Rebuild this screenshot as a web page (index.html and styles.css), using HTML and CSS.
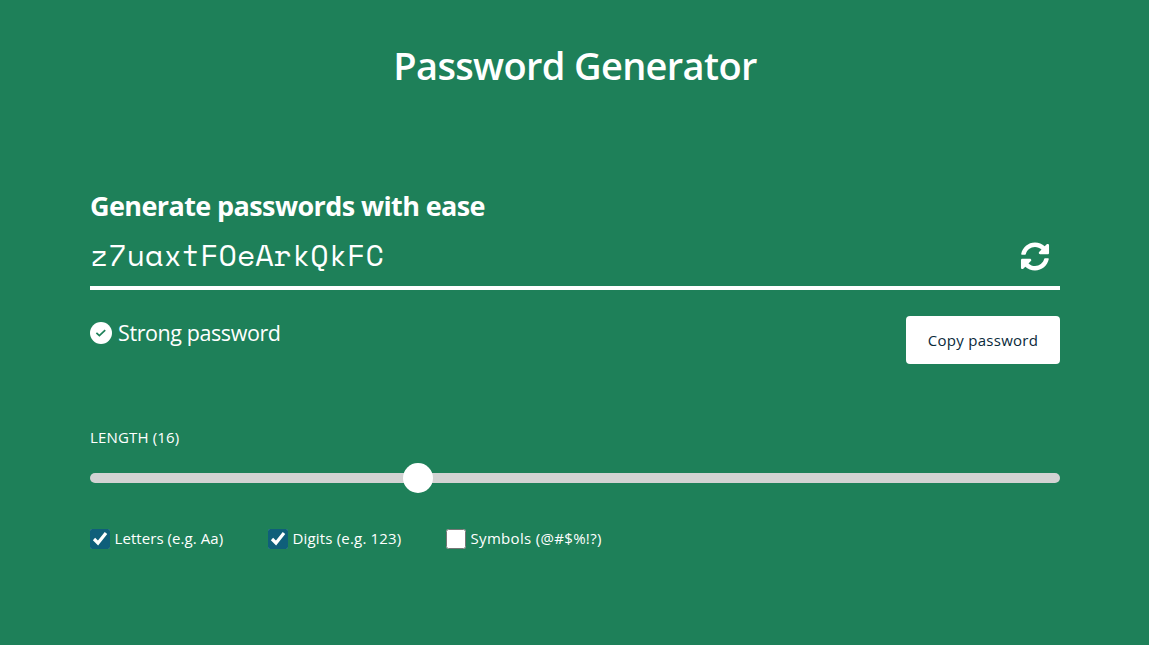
FILE: index.html
```html
<!DOCTYPE html>
<html lang="en">
<head>
<meta charset="utf-8">
<title>Password Generator</title>
<link rel="stylesheet" href="styles.css">
</head>
<body>
<main class="page">
  <h1 class="title"><span>Password Generator</span></h1>
  <h2 class="subtitle"><span>Generate passwords with ease</span></h2>
  <div class="password">
    <span class="password-text">z7uaxtFOeArkQkFC</span>
    <button class="refresh" aria-label="Generate a new password">
      <svg viewBox="0 0 512 512" width="30" height="29"><path fill="currentColor" d="M370.72 133.28C339.458 104.008 298.888 87.962 255.848 88c-77.458.068-144.328 53.178-162.791 126.85-1.344 5.363-6.122 9.15-11.651 9.15H24.103c-7.498 0-13.194-6.807-11.807-14.176C33.933 94.924 134.813 8 256 8c66.448 0 126.791 26.136 171.315 68.685L463.03 40.97C478.149 25.851 504 36.559 504 57.941V192c0 13.255-10.745 24-24 24H345.941c-21.382 0-32.09-25.851-16.971-40.971l41.75-41.749zM32 296h134.059c21.382 0 32.09 25.851 16.971 40.971l-41.75 41.75c31.262 29.273 71.835 45.319 114.876 45.28 77.418-.07 144.315-53.144 162.787-126.849 1.344-5.363 6.122-9.15 11.651-9.15h57.304c7.498 0 13.194 6.807 11.807 14.176C478.067 417.076 377.187 504 256 504c-66.448 0-126.791-26.136-171.315-68.685L48.97 471.03C33.851 486.149 8 475.441 8 454.059V320c0-13.255 10.745-24 24-24z"/></svg>
    </button>
  </div>
  <div class="status-row">
    <div class="status">
      <svg class="status-icon" viewBox="0 0 22 22" width="22" height="22"><circle cx="11" cy="11" r="11" fill="#fff"/><path d="M6.4 10.9l3 2.8 5.8-5.6" fill="none" stroke="#1e8059" stroke-width="1.7"/></svg>
      <span class="status-text">Strong password</span>
    </div>
    <button class="copy"><span>Copy password</span></button>
  </div>
  <label class="length" for="length"><span>LENGTH (16)</span></label>
  <input class="slider" id="length" type="range" min="6" max="36" value="16">
  <div class="options">
    <label class="option"><input class="check" type="checkbox" checked><span class="letters">Letters (e.g. Aa)</span></label>
    <label class="option"><input class="check" type="checkbox" checked><span class="digits">Digits (e.g. 123)</span></label>
    <label class="option"><input class="check" type="checkbox"><span class="symbols">Symbols (@#$%!?)</span></label>
  </div>
</main>
</body>
</html>
```
FILE: styles.css
```css
* { box-sizing: border-box; }
body {
  margin: 0;
  background: #1e8059;
  color: #fff;
  font-family: "Segoe UI", "Open Sans", "Noto Sans", sans-serif;
}
.page {
  width: 970px;
  margin-left: 90px;
  padding-top: 40px;
  display: flex;
  flex-direction: column;
}
.title {
  margin: 0;
  height: 52px;
  line-height: 50px;
  text-align: center;
  font-size: 38px;
  font-weight: 600;
  letter-spacing: -0.65px;
}
.subtitle {
  margin: 95px 0 0;
  height: 38px;
  line-height: 38px;
  font-size: 27px;
  font-weight: 700;
  letter-spacing: -0.6px;
}
.password {
  height: 65px;
  display: flex;
  align-items: center;
  justify-content: space-between;
  border-bottom: 4px solid #fff;
  padding-right: 10px;
}
.password-text {
  font-family: "Space Mono", "DejaVu Sans Mono", monospace;
  font-size: 30px;
  line-height: 58px;
  padding-bottom: 2px;
}
.refresh {
  margin-top: 2px;
  padding: 0;
  border: 0;
  background: none;
  color: #fff;
  display: flex;
}
.status-row {
  margin-top: 26px;
  display: flex;
  justify-content: space-between;
  align-items: flex-start;
}
.status {
  display: flex;
  align-items: center;
  gap: 6px;
  height: 34px;
  font-size: 21.5px;
  letter-spacing: -0.41px;
}
.status-text { padding-bottom: 2px; }
.copy {
  width: 154px;
  height: 48px;
  padding: 0;
  border: 0;
  border-radius: 4px;
  background: #fff;
  color: #0a2a3a;
  font: 500 15px "Segoe UI", "Open Sans", "Noto Sans", sans-serif;
  letter-spacing: 0.27px;
}
.length {
  margin-top: 61px;
  height: 25px;
  line-height: 24px;
  font-size: 15px;
  letter-spacing: 0.15px;
}
.slider {
  appearance: none;
  width: 970px;
  height: 10px;
  margin: 23px 0 0;
  border-radius: 5px;
  background: #d3d3d3;
}
.slider::-webkit-slider-thumb {
  appearance: none;
  width: 30px;
  height: 30px;
  border-radius: 50%;
  background: #fff;
}
.options {
  margin-top: 44px;
  display: grid;
  grid-template-columns: 178px 178px 200px;
}
.option {
  display: flex;
  align-items: center;
  gap: 4.5px;
  height: 24px;
  font-size: 15px;
  letter-spacing: 0.07px;
  white-space: nowrap;
}
.option span { padding-bottom: 2px; }
.digits { letter-spacing: 0.18px; }
.symbols { letter-spacing: 0.32px; }
.check {
  width: 20px;
  height: 20px;
  margin: 0;
  accent-color: #0f5f7a;
}
```
